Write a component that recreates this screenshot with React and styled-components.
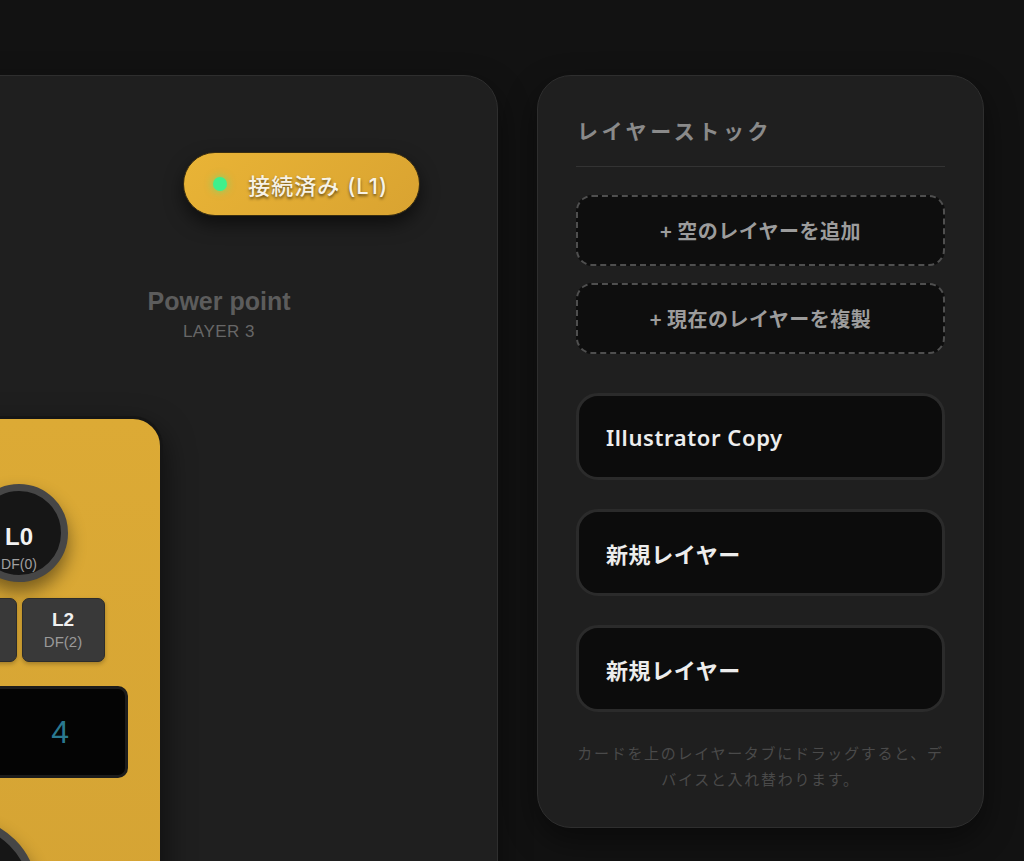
import React from "react";
import styled, { createGlobalStyle } from "styled-components";

const Global = createGlobalStyle`
  html, body { margin: 0; padding: 0; background: #121212; overflow: hidden; }
  * { box-sizing: border-box; }
  body { font-family: "Noto Sans", "Noto Sans CJK JP", sans-serif; }
`;

const Page = styled.div`
  width: 1024px;
  height: 861px;
  display: flex;
  justify-content: flex-end;
  align-items: flex-start;
  gap: 39px;
  padding: 75px 40px 0 0;
  overflow: hidden;
  background: #121212;
`;

const StagePanel = styled.section`
  flex-shrink: 0;
  width: 700px;
  height: 900px;
  background: #1f1f1f;
  border: 1px solid #2e2e2e;
  border-radius: 34px;
  box-shadow: 0 12px 32px rgba(0, 0, 0, 0.45);
  display: flex;
  flex-direction: column;
`;

const StatusRow = styled.div`
  display: flex;
  justify-content: flex-end;
  padding: 76px 77px 0 0;
`;

const StatusPill = styled.div`
  display: flex;
  align-items: center;
  gap: 21px;
  height: 64px;
  padding: 0 31px 0 29px;
  border-radius: 32px;
  background: linear-gradient(135deg, #e9b436 0%, #d9a331 100%);
  border: 1px solid #3a2e10;
  box-shadow: 0 8px 18px rgba(0, 0, 0, 0.55);
  color: #f7f2e6;
  font-family: Inter, "Noto Sans CJK JP", sans-serif;
  font-size: 22px;
  font-weight: 500;
  letter-spacing: 1px;
  text-shadow: 0 2px 3px rgba(0, 0, 0, 0.55);
`;

const Dot = styled.span`
  width: 14px;
  height: 14px;
  border-radius: 50%;
  background: #3ef08c;
  box-shadow: 0 0 8px rgba(62, 240, 140, 0.7);
`;

const TitleBlock = styled.div`
  align-self: flex-end;
  width: 556px;
  margin-top: 70px;
  text-align: center;
  font-family: "Liberation Sans", Arial, sans-serif;
`;

const DeviceName = styled.div`
  font-size: 25px;
  line-height: 30px;
  font-weight: 700;
  color: #5c5c5c;
`;

const LayerLabel = styled.div`
  margin-top: 6px;
  font-size: 17px;
  line-height: 20px;
  letter-spacing: 0.5px;
  color: #676767;
`;

const DeviceRow = styled.div`
  display: flex;
  padding-left: 76px;
  margin-top: 74px;
`;

const Device = styled.div`
  width: 288px;
  height: 560px;
  border: 3px solid #151515;
  border-radius: 30px;
  background: linear-gradient(180deg, #dcaa35 0%, #d4a334 100%);
  box-shadow: 0 12px 30px rgba(0, 0, 0, 0.6);
  display: flex;
  flex-direction: column;
  align-items: center;
  padding-top: 65px;
  font-family: "Liberation Sans", Arial, sans-serif;
`;

const Knob = styled.div`
  width: ${(p) => p.$size}px;
  height: ${(p) => p.$size}px;
  border-radius: 50%;
  border: ${(p) => p.$ring}px solid #464646;
  background: #161616;
  box-shadow: 0 10px 18px rgba(0, 0, 0, 0.45);
  display: flex;
  flex-direction: column;
  align-items: center;
  padding-top: 33px;
  flex-shrink: 0;
`;

const KnobLabel = styled.div`
  font-size: 24px;
  line-height: 26px;
  font-weight: 700;
  color: #f2f2f2;
`;

const KnobSub = styled.div`
  margin-top: 6px;
  font-size: 14px;
  line-height: 17px;
  color: #a0a0a0;
`;

const KeyRow = styled.div`
  display: flex;
  gap: 5px;
  margin-top: 16px;
`;

const Key = styled.div`
  width: 83px;
  height: 64px;
  border-radius: 7px;
  background: #393939;
  border: 1px solid #2c2c2c;
  box-shadow: 0 2px 4px rgba(0, 0, 0, 0.25);
  display: flex;
  flex-direction: column;
  align-items: center;
  justify-content: center;
  gap: 3px;
`;

const KeyLabel = styled.div`
  font-size: 19px;
  line-height: 20px;
  font-weight: 700;
  color: #f0f0f0;
`;

const KeySub = styled.div`
  font-size: 15px;
  line-height: 17px;
  color: #9a9a9a;
`;

const Display = styled.div`
  margin-top: 24px;
  width: 218px;
  height: 96px;
  border-radius: 10px;
  border: 3px solid #1c1c1c;
  background: #040404;
  display: flex;
  align-items: center;
  justify-content: flex-end;
  padding-right: 56px;
  font-size: 32px;
  color: #2a7890;
`;

const WheelRow = styled.div`
  align-self: stretch;
  display: flex;
  padding-left: 4px;
  margin-top: 39px;
`;

const StackPanel = styled.aside`
  flex-shrink: 0;
  width: 447px;
  height: 753px;
  background: #1f1f1f;
  border: 1px solid #2e2e2e;
  border-radius: 34px;
  box-shadow: 0 12px 32px rgba(0, 0, 0, 0.45);
  padding: 40px 38px 0 38px;
  display: flex;
  flex-direction: column;
  font-family: "Noto Sans", "Noto Sans CJK JP", sans-serif;
`;

const StackTitle = styled.h2`
  margin: 0;
  padding: 0 0 22px 1px;
  border-bottom: 1px solid #333;
  font-family: "Noto Sans CJK JP", sans-serif;
  font-size: 21px;
  line-height: 28px;
  font-weight: 700;
  letter-spacing: 3.6px;
  color: #8a8a8a;
`;

const DashedButton = styled.button`
  display: flex;
  align-items: center;
  justify-content: center;
  width: 100%;
  height: 71px;
  margin-top: ${(p) => p.$gap}px;
  border: 2px dashed #4f4f4f;
  border-radius: 16px;
  background: #0e0e0e;
  color: #9c9c9c;
  font-family: "Noto Sans CJK JP", sans-serif;
  font-size: 20px;
  font-weight: 700;
  letter-spacing: 0.5px;
`;

const LayerCard = styled.div`
  display: flex;
  align-items: center;
  height: 87px;
  margin-top: ${(p) => p.$gap}px;
  padding-left: 27px;
  border: 3px solid #2b2b2b;
  border-radius: 22px;
  background: #0c0c0c;
  color: #ededed;
  font-size: 22px;
  font-weight: 600;
  letter-spacing: 0.6px;
`;

const Hint = styled.p`
  margin: 28px 0 0;
  text-align: center;
  font-family: "Noto Sans CJK JP", sans-serif;
  font-size: 15px;
  line-height: 26px;
  letter-spacing: 1.7px;
  color: #4a4a4a;
`;

export default function App() {
  return (
    <>
      <Global />
      <Page>
        <StagePanel>
          <StatusRow>
            <StatusPill>
              <Dot />
              <span>接続済み (L1)</span>
            </StatusPill>
          </StatusRow>
          <TitleBlock>
            <DeviceName>Power point</DeviceName>
            <LayerLabel>LAYER 3</LayerLabel>
          </TitleBlock>
          <DeviceRow>
            <Device>
              <Knob $size={98} $ring={7}>
                <KnobLabel>L0</KnobLabel>
                <KnobSub>DF(0)</KnobSub>
              </Knob>
              <KeyRow>
                <Key>
                  <KeyLabel>L1</KeyLabel>
                  <KeySub>DF(1)</KeySub>
                </Key>
                <Key>
                  <KeyLabel>L2</KeyLabel>
                  <KeySub>DF(2)</KeySub>
                </Key>
              </KeyRow>
              <Display>4</Display>
              <WheelRow>
                <Knob $size={156} $ring={8} />
              </WheelRow>
            </Device>
          </DeviceRow>
        </StagePanel>
        <StackPanel>
          <StackTitle>レイヤーストック</StackTitle>
          <DashedButton $gap={28}>+ 空のレイヤーを追加</DashedButton>
          <DashedButton $gap={17}>+ 現在のレイヤーを複製</DashedButton>
          <LayerCard $gap={39}>Illustrator Copy</LayerCard>
          <LayerCard $gap={29}>新規レイヤー</LayerCard>
          <LayerCard $gap={29}>新規レイヤー</LayerCard>
          <Hint>カードを上のレイヤータブにドラッグすると、デバイスと入れ替わります。</Hint>
        </StackPanel>
      </Page>
    </>
  );
}
